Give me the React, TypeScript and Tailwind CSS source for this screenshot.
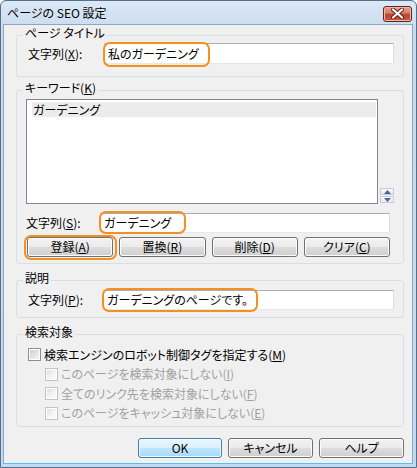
import type { JSX, ReactNode } from "react";

const btn =
  "flex h-[20px] items-center justify-center rounded-[3px] border border-[#707070] bg-[linear-gradient(#f2f2f2_0%,#ebebeb_50%,#dddddd_50%,#cfcfcf_100%)] text-[12px] leading-[12px] shadow-[inset_0_0_0_1px_#fcfcfc]";
const field =
  "h-full w-full border border-[#abadb3] border-b-[#e3e9ef] border-x-[#dbdfe6] bg-white pl-[3px] text-[12px] leading-[12px] flex items-center";
const ring = "pointer-events-none absolute rounded-[7px] border-2 border-[#f5901e]";
const legend = "ml-[6px] px-[2px] pb-[4px] text-[12px] leading-[12px]";
const group = "min-w-0 rounded-[3px] border border-[#d5dfe5]";

const Key = ({ k }: { k: string }): JSX.Element => (
  <>
    (<u className="underline-offset-[1px]">{k}</u>)
  </>
);

const Check = ({
  disabled,
  children,
}: {
  disabled?: boolean;
  children: ReactNode;
}): JSX.Element => (
  <div
    className={`flex h-[19.5px] items-center gap-[3px] text-[12px] leading-[12px] ${
      disabled ? "pl-[17px] text-[#a0a0a0]" : "text-black"
    }`}
  >
    <span
      className={`h-[13px] w-[13px] shrink-0 border shadow-[inset_0_0_0_1px_#fff] ${
        disabled
          ? "border-[#c3c3c3] bg-[linear-gradient(135deg,#d9d9d9_0%,#f4f4f4_55%,#fdfdfd_100%)]"
          : "border-[#8e8f8f] bg-[linear-gradient(135deg,#c9cdd2_0%,#e6e7e9_60%,#f6f6f6_100%)]"
      }`}
    />
    <span>{children}</span>
  </div>
);

export default function App(): JSX.Element {
  return (
    <div className="h-[468px] w-[417px] bg-white font-['Noto_Sans_CJK_JP','Noto_Sans',sans-serif] text-black [font-feature-settings:'palt']">
      <div className="flex h-full flex-col rounded-t-[6px] border border-[#55708d] bg-[linear-gradient(#dbe8f6,#c8dbef_30px,#c3d9ef)]">
        {/* title bar */}
        <div className="flex h-[23px] shrink-0 items-center justify-between pl-[6px] pr-[4px]">
          <span className="text-[12px] leading-[12px]">ページの SEO 設定</span>
          <div className="mt-[2px] flex h-[16px] w-[29px] items-center justify-center rounded-[3px] border border-[#5f241b] bg-[linear-gradient(#e7a493_0%,#d27a69_45%,#bf4332_50%,#c9553f_100%)] shadow-[inset_0_0_0_1px_#efb8a8]">
            <svg width="13" height="11" viewBox="0 0 13 11">
              <path d="M2 1.5 L11 9.5 M11 1.5 L2 9.5" stroke="#5a1d14" strokeWidth="4" strokeLinecap="round" />
              <path d="M2 1.5 L11 9.5 M11 1.5 L2 9.5" stroke="#ffffff" strokeWidth="2.2" strokeLinecap="round" />
            </svg>
          </div>
        </div>

        {/* client area */}
        <div className="mb-[3px] ml-[2px] mr-[3px] flex flex-1 flex-col border border-[#8ea6bf] border-b-[#4fc3f0] bg-[#f0f0f0] pl-[12px] pr-[8px]">
          <fieldset className={`${group} mt-[2px] pb-[12px]`}>
            <legend className={legend}>ページ タイトル</legend>
            <div className="flex h-[21px] items-center pl-[11px] pr-[9px]">
              <span className="w-[76px] shrink-0 text-[12px] leading-[12px]">
                文字列<Key k="X" />:
              </span>
              <div className="relative h-full flex-1">
                <div className={field}>私のガーデニング</div>
                <div className={`${ring} -left-[1px] -top-[1px] h-[25px] w-[107px]`} />
              </div>
            </div>
          </fieldset>

          <fieldset className={`${group} mt-[5px] pb-[6px] pt-[1px]`}>
            <legend className={legend}>
              キーワード<Key k="K" />
            </legend>
            <div className="px-[9px]">
              <div className="flex items-end gap-[2px]">
                <div className="h-[105px] w-[352px] border border-[#828790] bg-white pl-[5px] pr-[1px] pt-[2px]">
                  <div className="flex h-[15px] items-center bg-[#ececec] pl-[1px] text-[12px] leading-[12px]">
                    ガーデニング
                  </div>
                </div>
                <div className="mb-[1px] flex flex-col gap-[1px]">
                  {[0, 1].map((i) => (
                    <div
                      key={i}
                      className="flex h-[7px] w-[14px] items-center justify-center border border-[#c5ccd6] bg-[linear-gradient(#fafafa,#e4e8ee)]"
                    >
                      <svg width="7" height="4" viewBox="0 0 7 4">
                        <path d={i === 0 ? "M0 4 L3.5 0 L7 4 Z" : "M0 0 L3.5 4 L7 0 Z"} fill="#4b64a0" />
                      </svg>
                    </div>
                  ))}
                </div>
              </div>
              <div className="pr-[4px]">
                <div className="mt-[9px] flex h-[20px] items-center">
                  <span className="w-[74px] shrink-0 text-[12px] leading-[12px]">
                    文字列<Key k="S" />:
                  </span>
                  <div className="relative h-full flex-1">
                    <div className={field}>ガーデニング</div>
                    <div className={`${ring} -left-[1px] -top-[2px] h-[23px] w-[87px]`} />
                  </div>
                </div>
                <div className="mt-[4px] grid grid-cols-4 gap-[6px] pl-[1px]">
                  <div className="relative">
                    <div className={btn}>
                      登録<Key k="A" />
                    </div>
                    <div className={`${ring} -left-[3px] -top-[2px] h-[25px] w-[93px]`} />
                  </div>
                  <div className={btn}>
                    置換<Key k="R" />
                  </div>
                  <div className={btn}>
                    削除<Key k="D" />
                  </div>
                  <div className={btn}>
                    クリア<Key k="C" />
                  </div>
                </div>
              </div>
            </div>
          </fieldset>

          <fieldset className={`${group} mt-[8px] pb-[7px] pt-[2px]`}>
            <legend className={legend}>説明</legend>
            <div className="flex h-[20px] items-center pl-[11px] pr-[9px]">
              <span className="w-[75px] shrink-0 text-[12px] leading-[12px]">
                文字列<Key k="P" />:
              </span>
              <div className="relative h-full flex-1">
                <div className={field}>ガーデニングのページです。</div>
                <div className={`${ring} -left-[1px] -top-[2px] h-[24px] w-[156px]`} />
              </div>
            </div>
          </fieldset>

          <fieldset className={`${group} mt-[8px] pb-[3px] pt-[3px]`}>
            <legend className={legend}>検索対象</legend>
            <div className="pl-[11px] pr-[9px]">
              <Check>
                検索エンジンのロボット制御タグを指定する<Key k="M" />
              </Check>
              <Check disabled>
                このページを検索対象にしない<Key k="I" />
              </Check>
              <Check disabled>
                全てのリンク先を検索対象にしない<Key k="F" />
              </Check>
              <Check disabled>
                このページをキャッシュ対象にしない<Key k="E" />
              </Check>
            </div>
          </fieldset>

          <div className="mt-[11px] flex justify-end gap-[6px]">
            <div className="flex h-[20px] w-[84px] items-center justify-center rounded-[3px] border border-[#3c7fb1] bg-[linear-gradient(#eaf6fd_0%,#d9f0fc_50%,#bee6fd_50%,#a7d9f5_100%)] text-[12px] leading-[12px] shadow-[inset_0_0_0_1px_#f4fbff]">
              OK
            </div>
            <div className={`${btn} w-[85px]`}>キャンセル</div>
            <div className={`${btn} w-[85px]`}>ヘルプ</div>
          </div>
        </div>
      </div>
    </div>
  );
}
